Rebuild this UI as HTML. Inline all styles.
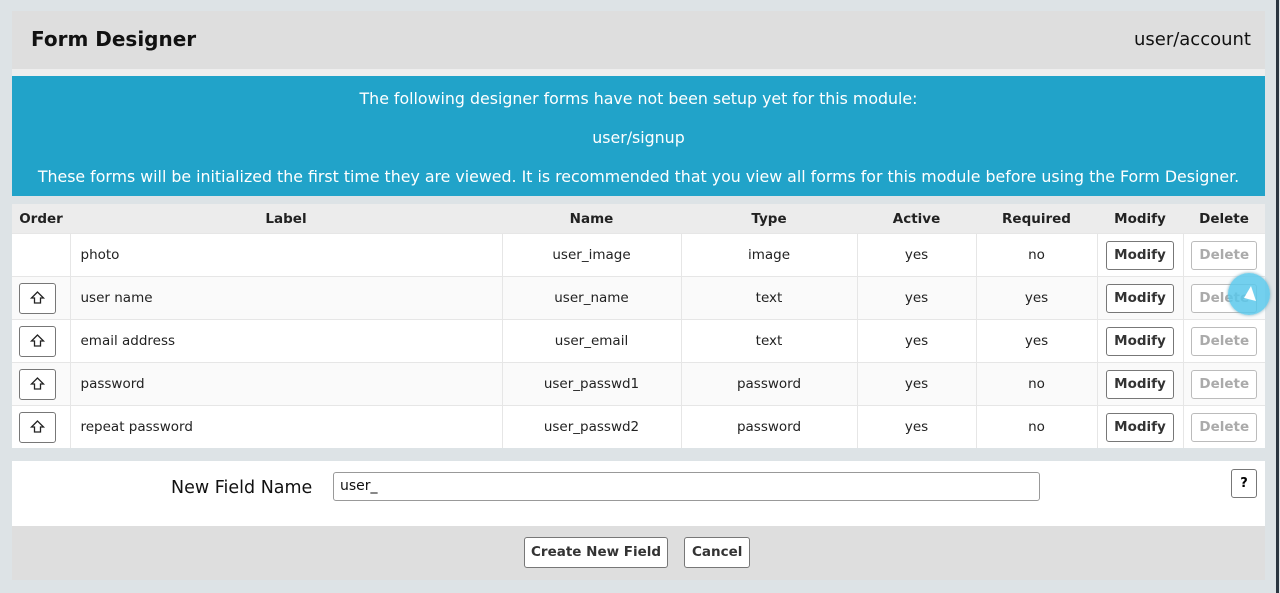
<!DOCTYPE html>
<html><head><style>
body{margin:0;width:1280px;height:593px;background:#dde3e6;font-family:"DejaVu Sans","Liberation Sans",sans-serif;position:relative;overflow:hidden}
.rb{position:absolute;left:1276px;top:0;width:3px;height:593px;background:#2a3540}
.hdr{position:absolute;left:12px;top:11px;width:1253px;height:58px;background:#dedede}
.hdr h1{position:absolute;left:19px;top:16px;margin:0;font-size:20px;font-weight:bold;color:#111}
.hdr .r{position:absolute;right:14px;top:18px;font-size:18px;color:#111}
.gap{position:absolute;left:12px;top:69px;width:1253px;height:7px;background:#eee}
.info{position:absolute;left:12px;top:76px;width:1253px;height:120px;background:#21a3c9;color:#fff;text-align:center;font-size:15.8px}
.info div{position:absolute;left:0;right:0}
table{position:absolute;left:12px;top:204px;width:1253px;border-collapse:collapse;font-size:13.5px;color:#222}
th{height:29px;background:#ececec;font-weight:bold;font-size:13.5px;text-align:center;padding:0}
td{height:42px;border-top:1px solid #e6e6e6;border-left:1px solid #e6e6e6;text-align:center;padding:0;background:#fff}
tr:nth-child(odd) td{background:#fafafa}
td:first-child{border-left:none;text-align:left;padding-left:7px}
td.l{text-align:left;padding-left:10px}
.b{display:inline-block;border:1px solid #777;border-radius:3px;background:#fff;font-weight:bold;font-size:13.5px;color:#333;padding:5px 7px;line-height:17px}
.b.d{color:#aaa;border-color:#bbb}
.up{display:inline-block;width:35px;height:29px;border:1px solid #777;border-radius:3px;background:#fff;vertical-align:middle;position:relative}
.nf{position:absolute;left:12px;top:461px;width:1253px;height:65px;background:#fff}
.ft{position:absolute;left:12px;top:526px;width:1253px;height:54px;background:#dedede}
.circ{position:absolute;left:1228px;top:273px;width:42px;height:42px;border-radius:50%;background:rgba(90,200,235,.85);box-shadow:0 0 3px #7ab}
</style></head><body>
<div class="rb"></div>
<div class="hdr"><h1>Form Designer</h1><div class="r">user/account</div></div>
<div class="gap"></div>
<div class="info">
<div style="top:13px">The following designer forms have not been setup yet for this module:</div>
<div style="top:52px">user/signup</div>
<div style="top:91px">These forms will be initialized the first time they are viewed. It is recommended that you view all forms for this module before using the Form Designer.</div>
</div>
<table>
<tr><th style="width:58px">Order</th><th style="width:432px">Label</th><th style="width:179px">Name</th><th style="width:176px">Type</th><th style="width:119px">Active</th><th style="width:121px">Required</th><th style="width:86px">Modify</th><th>Delete</th></tr>
<tr><td></td><td class="l">photo</td><td>user_image</td><td>image</td><td>yes</td><td>no</td><td><span class="b">Modify</span></td><td><span class="b d">Delete</span></td></tr>
<tr><td><span class="up"><svg width="35" height="29"><path d="M17.5 8 L11.5 14 L14.5 14 L14.5 19 L20.5 19 L20.5 14 L23.5 14 Z" fill="none" stroke="#222" stroke-width="1.3"/></svg></span></td><td class="l">user name</td><td>user_name</td><td>text</td><td>yes</td><td>yes</td><td><span class="b">Modify</span></td><td><span class="b d">Delete</span></td></tr>
<tr><td><span class="up"><svg width="35" height="29"><path d="M17.5 8 L11.5 14 L14.5 14 L14.5 19 L20.5 19 L20.5 14 L23.5 14 Z" fill="none" stroke="#222" stroke-width="1.3"/></svg></span></td><td class="l">email address</td><td>user_email</td><td>text</td><td>yes</td><td>yes</td><td><span class="b">Modify</span></td><td><span class="b d">Delete</span></td></tr>
<tr><td><span class="up"><svg width="35" height="29"><path d="M17.5 8 L11.5 14 L14.5 14 L14.5 19 L20.5 19 L20.5 14 L23.5 14 Z" fill="none" stroke="#222" stroke-width="1.3"/></svg></span></td><td class="l">password</td><td>user_passwd1</td><td>password</td><td>yes</td><td>no</td><td><span class="b">Modify</span></td><td><span class="b d">Delete</span></td></tr>
<tr><td><span class="up"><svg width="35" height="29"><path d="M17.5 8 L11.5 14 L14.5 14 L14.5 19 L20.5 19 L20.5 14 L23.5 14 Z" fill="none" stroke="#222" stroke-width="1.3"/></svg></span></td><td class="l">repeat password</td><td>user_passwd2</td><td>password</td><td>yes</td><td>no</td><td><span class="b">Modify</span></td><td><span class="b d">Delete</span></td></tr>
</table>
<div class="circ"><svg width="42" height="42"><path d="M23 13 L28 28 L16 25 Z" fill="#fff"/></svg></div>
<div class="nf">
<div style="position:absolute;left:159px;top:17px;font-size:17.5px;color:#111">New Field Name</div>
<div style="position:absolute;left:321px;top:11px;width:699px;height:27px;border:1px solid #999;border-radius:3px;font-size:14px;line-height:27px;padding-left:6px;color:#111">user_</div>
<div style="position:absolute;left:1219px;top:8px;width:24px;height:27px;border:1px solid #777;border-radius:3px;font-weight:bold;font-size:13px;text-align:center;line-height:27px">?</div>
</div>
<div class="ft">
<span class="b" style="position:absolute;left:512px;top:11px;padding:6px 6px">Create New Field</span>
<span class="b" style="position:absolute;left:672px;top:11px;padding:6px 7px">Cancel</span>
</div>
</body></html>
